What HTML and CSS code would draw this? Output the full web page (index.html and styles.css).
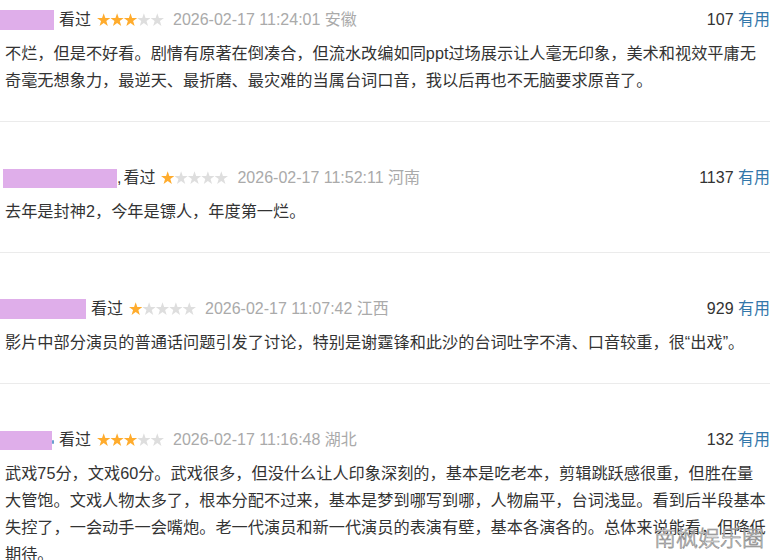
FILE: index.html
```html
<!DOCTYPE html>
<html lang="zh">
<head>
<meta charset="utf-8">
<link rel="stylesheet" href="styles.css">
</head>
<body>
<svg class="defs" width="0" height="0" aria-hidden="true">
  <defs>
    <symbol id="star" viewBox="0 0 13 13">
      <polygon points="6.5,0.2 8.09,4.82 12.97,4.9 9.07,7.83 10.5,12.5 6.5,9.7 2.5,12.5 3.93,7.83 0.03,4.9 4.91,4.82"/>
    </symbol>
  </defs>
</svg>
<div class="list">
  <div class="review first">
    <div class="head">
      <div class="meta">
        <span class="user u1"></span>
        <span class="watched">看过</span>
        <svg class="stars" width="67" height="14" viewBox="0 0 67 14"><use href="#star" x="0" y="0" width="13.4" height="13.4" class="on"/><use href="#star" x="13.4" width="13.4" height="13.4" class="on"/><use href="#star" x="26.8" width="13.4" height="13.4" class="on"/><use href="#star" x="40.2" width="13.4" height="13.4" class="off"/><use href="#star" x="53.6" width="13.4" height="13.4" class="off"/></svg>
        <span class="time">2026-02-17 11:24:01 安徽</span>
      </div>
      <div class="vote"><span class="count">107</span> <span class="useful">有用</span></div>
    </div>
    <p class="text">不烂，但是不好看。剧情有原著在倒凑合，但流水改编如同ppt过场展示让人毫无印象，美术和视效平庸无奇毫无想象力，最逆天、最折磨、最灾难的当属台词口音，我以后再也不无脑要求原音了。</p>
  </div>
  <div class="review">
    <div class="head">
      <div class="meta">
        <span class="user u2"></span><span class="comma">,</span>
        <span class="watched">看过</span>
        <svg class="stars" width="67" height="14" viewBox="0 0 67 14"><use href="#star" x="0" width="13.4" height="13.4" class="on"/><use href="#star" x="13.4" width="13.4" height="13.4" class="off"/><use href="#star" x="26.8" width="13.4" height="13.4" class="off"/><use href="#star" x="40.2" width="13.4" height="13.4" class="off"/><use href="#star" x="53.6" width="13.4" height="13.4" class="off"/></svg>
        <span class="time">2026-02-17 11:52:11 河南</span>
      </div>
      <div class="vote"><span class="count">1137</span> <span class="useful">有用</span></div>
    </div>
    <p class="text">去年是封神2，今年是镖人，年度第一烂。</p>
  </div>
  <div class="review">
    <div class="head">
      <div class="meta">
        <span class="user u3"></span>
        <span class="watched">看过</span>
        <svg class="stars" width="67" height="14" viewBox="0 0 67 14"><use href="#star" x="0" width="13.4" height="13.4" class="on"/><use href="#star" x="13.4" width="13.4" height="13.4" class="off"/><use href="#star" x="26.8" width="13.4" height="13.4" class="off"/><use href="#star" x="40.2" width="13.4" height="13.4" class="off"/><use href="#star" x="53.6" width="13.4" height="13.4" class="off"/></svg>
        <span class="time">2026-02-17 11:07:42 江西</span>
      </div>
      <div class="vote"><span class="count">929</span> <span class="useful">有用</span></div>
    </div>
    <p class="text">影片中部分演员的普通话问题引发了讨论，特别是谢霆锋和此沙的台词吐字不清、口音较重，很“出戏”。</p>
  </div>
  <div class="review">
    <div class="head">
      <div class="meta">
        <span class="user u4"></span><span class="tail"></span>
        <span class="watched">看过</span>
        <svg class="stars" width="67" height="14" viewBox="0 0 67 14"><use href="#star" x="0" width="13.4" height="13.4" class="on"/><use href="#star" x="13.4" width="13.4" height="13.4" class="on"/><use href="#star" x="26.8" width="13.4" height="13.4" class="on"/><use href="#star" x="40.2" width="13.4" height="13.4" class="off"/><use href="#star" x="53.6" width="13.4" height="13.4" class="off"/></svg>
        <span class="time">2026-02-17 11:16:48 湖北</span>
      </div>
      <div class="vote"><span class="count">132</span> <span class="useful">有用</span></div>
    </div>
    <p class="text">武戏75分，文戏60分。武戏很多，但没什么让人印象深刻的，基本是吃老本，剪辑跳跃感很重，但胜在量大管饱。文戏人物太多了，根本分配不过来，基本是梦到哪写到哪，人物扁平，台词浅显。看到后半段基本失控了，一会动手一会嘴炮。老一代演员和新一代演员的表演有壁，基本各演各的。总体来说能看，但降低期待。</p>
  </div>
</div>
<div class="watermark">南枫娱乐圈</div>
</body>
</html>
```
FILE: styles.css
```css
html, body {
  margin: 0;
  padding: 0;
  background: #fff;
}
body {
  width: 775px;
  height: 560px;
  overflow: hidden;
  position: relative;
  font-family: "Liberation Sans", "Noto Sans CJK SC", sans-serif;
  color: #333;
}
.defs {
  position: absolute;
  width: 0;
  height: 0;
}
.list {
  display: flex;
  flex-direction: column;
  padding: 0 5px 0 0;
}
.review {
  padding: 46px 0 27px;
  border-top: 1px solid #ebebeb;
}
.review.first {
  padding-top: 10px;
  border-top: none;
}
.head {
  display: flex;
  justify-content: space-between;
  align-items: center;
  height: 20px;
  font-size: 16px;
  line-height: 20px;
}
.meta {
  display: flex;
  align-items: center;
}
.user {
  display: block;
  height: 20px;
  background: #dfaeea;
}
.u1 { width: 54px; margin-right: 5px; }
.u2 { width: 114px; margin-left: 3px; height: 19px; }
.comma { margin-right: 2px; }
.u3 { width: 86px; margin-right: 5px; }
.u4 { width: 52px; height: 19px; }
.tail {
  display: block;
  width: 2px;
  height: 4px;
  border-radius: 1px;
  background: #6a9fcf;
  margin: 4px 5px 0 0;
}
.watched {
  color: #333;
  margin-right: 6px;
}
.stars {
  display: block;
  margin-right: 9px;
}
.stars .on { fill: #ffac2d; }
.stars .off { fill: #dedede; }
.time {
  color: #aaa;
}
.vote {
  white-space: pre;
}
.count { color: #333; }
.useful { color: #37a; }
.text {
  margin: 10px 0 0;
  padding: 0 2.5px 0 5px;
  font-family: "Liberation Sans", "Noto Sans CJK SC", sans-serif;
  font-size: 16.2px;
  line-height: 27px;
  color: #333;
}
.watermark {
  position: absolute;
  left: 654px;
  top: 521px;
  font-family: "Noto Sans CJK SC", sans-serif;
  font-weight: 300;
  font-size: 22px;
  line-height: 30px;
  color: #fff;
  -webkit-text-stroke: 0.7px #8c8c8c;
}
```
